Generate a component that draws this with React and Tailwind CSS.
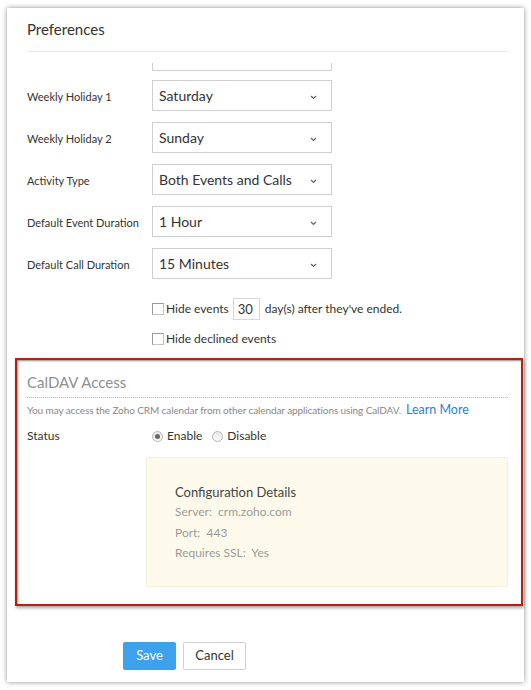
import React from "react";

function Chevron() {
  return (
    <svg width="7" height="5" viewBox="0 0 7 5" className="absolute right-[14px] top-[14px]">
      <path d="M1 1 L3.5 3.5 L6 1" fill="none" stroke="#666" strokeWidth="1.2" />
    </svg>
  );
}

function Row({ label, value }) {
  return (
    <div className="flex items-center h-[31px]">
      <div className="w-[125px] pt-[3px] text-[11px] text-[#333]">{label}</div>
      <div className="relative w-[180px] h-[31px] border border-[#cfcfcf] bg-white flex items-center pl-[6px] text-[14px] text-[#333]">
        {value}
        <Chevron />
      </div>
    </div>
  );
}

function Checkbox() {
  return (
    <span className="inline-block w-[12px] h-[12px] border border-[#c4c4c4] border-t-[#9a9a9a] border-l-[#9a9a9a] bg-white mr-[2px]" />
  );
}

function Radio({ checked }) {
  return (
    <span className="inline-flex items-center justify-center w-[11px] h-[11px] rounded-full border border-[#b5b5b5] bg-gradient-to-b from-[#e8e8e8] to-[#fafafa] mr-[4px]">
      {checked && <span className="w-[5px] h-[5px] rounded-full bg-[#666]" />}
    </span>
  );
}

export default function App() {
  return (
    <div
      className="w-[531px] h-[690px] bg-white pt-[8px] pl-[7px]"
      style={{ fontFamily: "Lato, 'Open Sans', sans-serif" }}
    >
      <div className="w-[517px] h-[674px] bg-white shadow-[0_0_5px_rgba(0,0,0,0.45)] flex flex-col">
        <div className="px-[20px]">
          <div className="pt-[11px] h-[43px] text-[15px] text-[#333] leading-[20px]">Preferences</div>
          <div className="border-t border-[#e6e6e6] w-[481px]" />
          <div className="ml-[125px] mt-[11px] w-[180px] h-[8px] border-x border-b border-[#cfcfcf]" />
          <div className="mt-[9px] flex flex-col gap-[11px]">
            <Row label="Weekly Holiday 1" value="Saturday" />
            <Row label="Weekly Holiday 2" value="Sunday" />
            <Row label="Activity Type" value="Both Events and Calls" />
            <Row label="Default Event Duration" value="1 Hour" />
            <Row label="Default Call Duration" value="15 Minutes" />
          </div>
          <div className="ml-[125px] mt-[19px] flex items-center h-[22px] text-[12px] text-[#333]">
            <Checkbox />
            <span>Hide events</span>
            <span className="ml-[4px] mr-[5px] w-[27px] h-[22px] border border-[#d6d6d6] flex items-center pl-[4px] pt-[2px] text-[13px]">30</span>
            <span>day(s) after they've ended.</span>
          </div>
          <div className="ml-[125px] mt-[9px] flex items-center h-[20px] text-[12px] text-[#333]">
            <Checkbox />
            <span>Hide declined events</span>
          </div>
        </div>

        <div className="ml-[8px] mr-[1px] mt-[9px] h-[248px] border-2 border-[#b02212] shadow-[1px_2px_3px_rgba(0,0,0,0.35),inset_1px_1px_2px_rgba(0,0,0,0.45)] pl-[10px] pr-[13px]">
          <div className="pt-[12px] h-[37px] text-[15px] leading-[20px] text-[#8f8f8f]">CalDAV Access</div>
          <div className="border-t border-dotted border-[#b5b5b5]" />
          <div className="mt-[4px] h-[16px] flex items-center text-[10px] text-[#888] whitespace-nowrap">
            <span className="tracking-[-0.1px]">You may access the Zoho CRM calendar from other calendar applications using CalDAV.</span>
            <span className="ml-[5px] text-[12.5px] text-[#2d7fd4]">Learn More</span>
          </div>
          <div className="mt-[8px] h-[20px] flex items-center text-[12px] text-[#333]">
            <div className="w-[125px] text-[12px]">Status</div>
            <Radio checked />
            <span className="mr-[10px]">Enable</span>
            <Radio />
            <span>Disable</span>
          </div>
          <div className="ml-[119px] mt-[11px] h-[130px] bg-[#fdfaeb] border border-[#f3efdc] rounded-[2px] pl-[28px] pt-[24px]">
            <div className="text-[13px] leading-[20px] text-[#444]">Configuration Details</div>
            <div className="text-[12px] leading-[20.5px] text-[#9a9a9a]">
              <div>Server:&nbsp; crm.zoho.com</div>
              <div>Port:&nbsp; 443</div>
              <div>Requires SSL:&nbsp; Yes</div>
            </div>
          </div>
        </div>

        <div className="ml-[116px] mt-[36px] flex gap-[7px]">
          <button className="w-[53px] h-[28px] bg-[#3ea1ec] rounded-[2px] text-white text-[13px]">Save</button>
          <button className="w-[63px] h-[28px] border border-[#cfcfcf] rounded-[2px] text-[#333] text-[13px] bg-white">Cancel</button>
        </div>
      </div>
    </div>
  );
}
